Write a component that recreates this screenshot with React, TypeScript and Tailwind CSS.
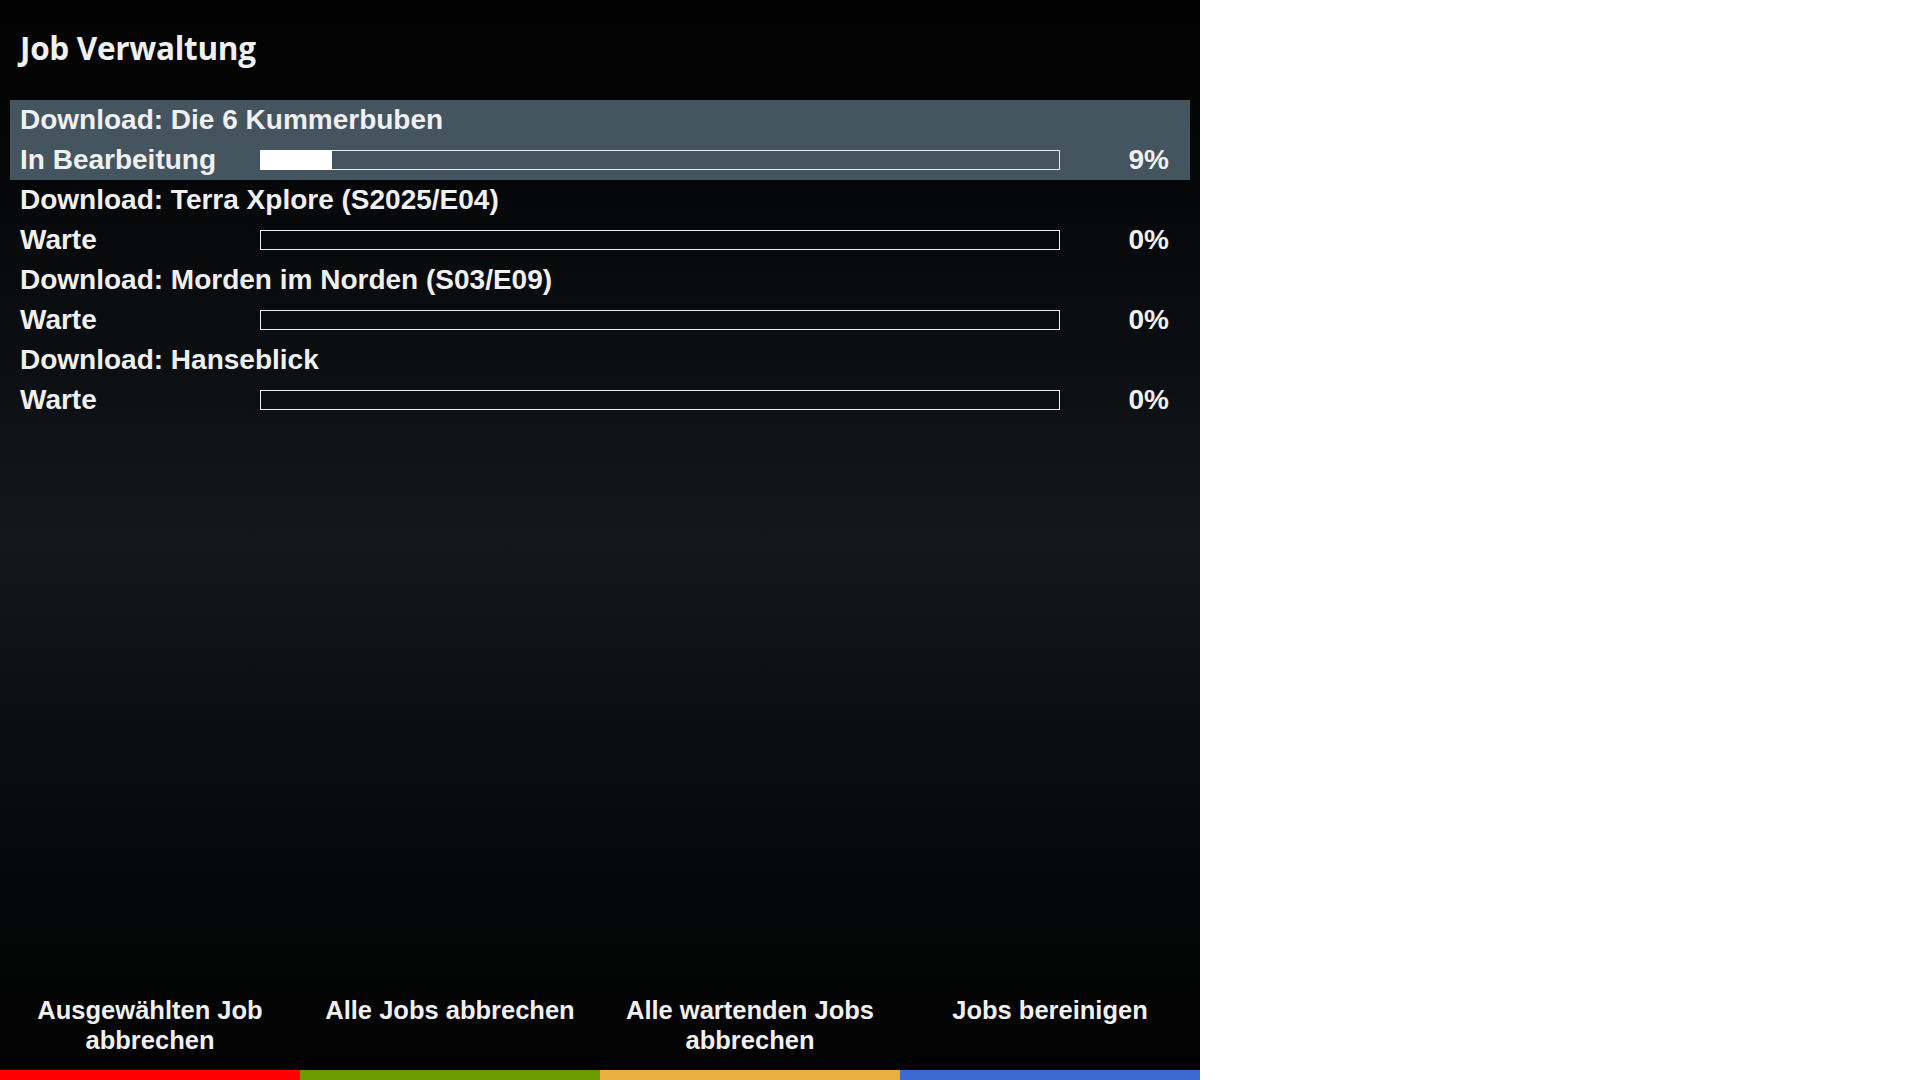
const jobs = [
  { title: "Download: Die 6 Kummerbuben", status: "In Bearbeitung", progress: 9 },
  { title: "Download: Terra Xplore (S2025/E04)", status: "Warte", progress: 0 },
  { title: "Download: Morden im Norden (S03/E09)", status: "Warte", progress: 0 },
  { title: "Download: Hanseblick", status: "Warte", progress: 0 },
];

const buttons = [
  { label: "Ausgewählten Job abbrechen", color: "bg-[#ff0000]" },
  { label: "Alle Jobs abbrechen", color: "bg-[#6a9b02]" },
  { label: "Alle wartenden Jobs abbrechen", color: "bg-[#e8b041]" },
  { label: "Jobs bereinigen", color: "bg-[#3a6bd1]" },
];

export default function App() {
  const selected = 0;

  return (
    <div className="w-[1920px] h-[1080px] bg-white flex">
      <div className="w-[1200px] h-[1080px] flex flex-col bg-linear-to-b from-[#020202] via-[#13181c] to-[#020202] text-[#f0f0f0] font-['Liberation_Sans',Arial,sans-serif] font-bold">
        {/* Header */}
        <div className="h-[100px] px-[20px] pt-[26px]">
          <h1 className="font-['Open_Sans',sans-serif] font-bold text-[31.5px] leading-[44px] tracking-[-0.3px]">
            Job Verwaltung
          </h1>
        </div>

        {/* Job list */}
        <div className="flex-1 px-[10px]">
          {jobs.map((job, i) => (
            <div
              key={job.title}
              className={i === selected ? "bg-[#44555f]" : ""}
            >
              <div className="h-[40px] pl-[10px] text-[28px] leading-[40px]">
                {job.title}
              </div>
              <div className="h-[40px] pl-[10px] pr-[21px] flex items-center text-[28px] leading-[40px]">
                <div className="w-[240px]">{job.status}</div>
                <div className="w-[800px] h-[20px] border border-[#ececec] relative">
                  <div
                    className="absolute -left-px -top-px -bottom-px bg-[#ffffff]"
                    style={{ width: (800 * job.progress) / 100 }}
                  />
                </div>
                <div className="flex-1 text-right">{job.progress}%</div>
              </div>
            </div>
          ))}
        </div>

        {/* Footer buttons */}
        <div className="grid grid-cols-4">
          {buttons.map((b) => (
            <div key={b.label} className="flex flex-col">
              <div className="h-[75px] px-[20px] text-center text-[25.5px] leading-[30px]">
                {b.label}
              </div>
              <div className={`h-[10px] ${b.color}`} />
            </div>
          ))}
        </div>
      </div>
    </div>
  );
}
